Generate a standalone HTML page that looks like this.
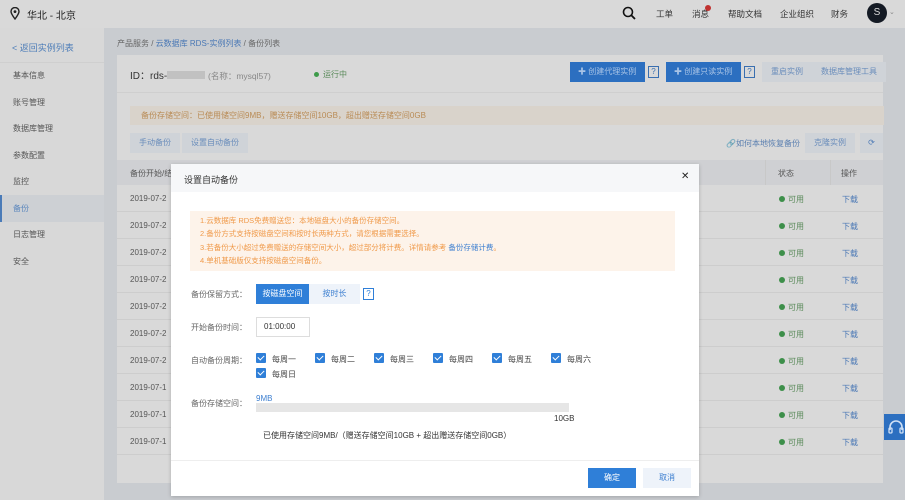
<!DOCTYPE html>
<html><head><meta charset="utf-8"><style>
*{margin:0;padding:0;box-sizing:border-box}
body{width:905px;height:500px;overflow:hidden;background:#c9ccd0;font-family:"Liberation Sans","Noto Sans CJK SC",sans-serif;font-size:8px;color:#555;position:relative}
.abs{position:absolute}
.top{left:0;top:0;width:905px;height:28px;background:#d9d9d9}
.top .t{position:absolute;top:8px;font-size:8.5px;color:#333}
.side{left:0;top:28px;width:104px;height:472px;background:#d8d8d8}
.side div{position:absolute;left:13px;font-size:8px;color:#555}
.card{left:117px;top:55px;width:766px;height:428px;background:#d9d9d9}
.btnb{background:#2c6fc0;color:#a9c4e6;height:20px;line-height:20px;font-size:8px;padding:0 8px}
.btnl{background:#cfd3d8;color:#6a8dbb;height:20px;line-height:20px;font-size:8px;padding:0 9px}
.q{width:11px;height:12px;border:1px solid #3a6fb0;color:#3a6fb0;font-size:8px;line-height:10px;text-align:center}
.row{left:117px;width:766px;height:27px;border-bottom:1px solid #cdcdcd}
.row .d{position:absolute;left:13px;top:9px;color:#555}
.row .s{position:absolute;left:662px;top:9px;color:#5a8a5a}
.row .s:before{content:"";display:inline-block;width:6px;height:6px;border-radius:50%;background:#3d8f4a;margin-right:3px}
.row .o{position:absolute;left:725px;top:9px;color:#4a78b5}
.modal{left:171px;top:164px;width:528px;height:332px;background:#fff;box-shadow:0 1px 4px rgba(0,0,0,.2)}
.lbl{position:absolute;left:20px;color:#666;font-size:8px}
.cb{display:inline-block;width:10px;height:10px;background:#2f7fd8;border-radius:1px;position:relative;vertical-align:-1px;margin-right:6px}
.cb:after{content:"";position:absolute;left:3px;top:1px;width:3px;height:5px;border:solid #fff;border-width:0 1.3px 1.3px 0;transform:rotate(45deg)}
.ck{position:absolute;font-size:8px;color:#444}
</style></head><body>
<div class="abs top">
 <svg class="abs" style="left:10px;top:7px" width="10" height="13" viewBox="0 0 10 13"><path d="M5 12C2 8 1 6 1 4.5a4 4 0 0 1 8 0C9 6 8 8 5 12z" fill="none" stroke="#222" stroke-width="1.4"/><circle cx="5" cy="4.6" r="1.4" fill="#222"/></svg>
 <div class="abs" style="left:27px;top:7px;font-size:10px;color:#222">华北 - 北京</div>
 <svg class="abs" style="left:622px;top:6px" width="14" height="14" viewBox="0 0 14 14"><circle cx="6" cy="6" r="4.5" fill="none" stroke="#111" stroke-width="1.6"/><path d="M9.3 9.3L13 13" stroke="#111" stroke-width="1.8"/></svg>
 <div class="t" style="left:656px">工单</div>
 <div class="t" style="left:692px">消息</div>
 <div class="abs" style="left:705px;top:5px;width:6px;height:6px;border-radius:50%;background:#c0312f"></div>
 <div class="t" style="left:728px">帮助文档</div>
 <div class="t" style="left:780px">企业组织</div>
 <div class="t" style="left:831px">财务</div>
 <div class="abs" style="left:867px;top:3px;width:20px;height:20px;border-radius:50%;background:#141a24;color:#ddd;font-size:10px;text-align:center;line-height:20px">S</div>
 <div class="abs" style="left:889px;top:8px;color:#888;font-size:7px">⌄</div>
</div>
<div class="abs side">
 <div style="left:12px;top:13px;color:#4d7db8;font-size:9px">&lt; 返回实例列表</div>
 <div style="left:0;top:34px;width:104px;height:1px;background:#cfcfcf"></div>
 <div style="top:42px">基本信息</div>
 <div style="top:69px">账号管理</div>
 <div style="top:95px">数据库管理</div>
 <div style="top:122px">参数配置</div>
 <div style="top:148px">监控</div>
 <div style="left:0;top:167px;width:104px;height:27px;background:#cdd0d4;border-left:2px solid #4a7bb8"></div>
 <div style="top:175px;color:#5a86bd">备份</div>
 <div style="top:201px">日志管理</div>
 <div style="top:228px">安全</div>
</div>
<div class="abs" style="left:117px;top:38px;color:#666">产品服务 / <span style="color:#4a78b5">云数据库 RDS-实例列表</span> / 备份列表</div>
<div class="abs card"></div>
<div class="abs" style="left:130px;top:67px;font-size:10px;color:#333">ID：rds-<span style="display:inline-block;width:38px;height:8px;background:#aaa;opacity:.5;vertical-align:0"></span> <span style="color:#888;font-size:8.5px">(名称：mysql57)</span></div>
<div class="abs" style="left:314px;top:69px;color:#5a8a5a"><span style="display:inline-block;width:5px;height:5px;border-radius:50%;background:#3d9b4a;margin-right:4px"></span>运行中</div>
<div class="abs btnb" style="left:570px;top:62px;width:75px">✚ 创建代理实例</div>
<div class="abs q" style="left:648px;top:66px">?</div>
<div class="abs btnb" style="left:666px;top:62px;width:75px">✚ 创建只读实例</div>
<div class="abs q" style="left:744px;top:66px">?</div>
<div class="abs btnl" style="left:762px;top:62px">重启实例</div>
<div class="abs btnl" style="left:812px;top:62px">数据库管理工具</div>
<div class="abs" style="left:117px;top:92px;width:766px;height:1px;background:#cfcfcf"></div>
<div class="abs" style="left:130px;top:106px;width:754px;height:19px;background:#d9d3cb;color:#b98b55;line-height:19px;padding-left:11px">备份存储空间：已使用储空间9MB，赠送存储空间10GB，超出赠送存储空间0GB</div>
<div class="abs btnl" style="left:130px;top:133px">手动备份</div>
<div class="abs btnl" style="left:182px;top:133px;padding:0 9px">设置自动备份</div>
<div class="abs" style="left:726px;top:138px;color:#5a7fb0">🔗如何本地恢复备份</div>
<div class="abs btnl" style="left:805px;top:133px">克隆实例</div>
<div class="abs btnl" style="left:860px;top:133px;width:23px;padding:0;text-align:center;color:#4a78b5">⟳</div>
<div class="abs" style="left:117px;top:160px;width:766px;height:25px;background:#cfd0d3"></div>
<div class="abs" style="left:130px;top:168px;color:#555">备份开始/结</div>
<div class="abs" style="left:778px;top:168px;color:#555">状态</div>
<div class="abs" style="left:841px;top:168px;color:#555">操作</div>
<div class="abs" style="left:765px;top:160px;width:1px;height:25px;background:#c8c8c8"></div>
<div class="abs" style="left:830px;top:160px;width:1px;height:25px;background:#c8c8c8"></div>
<div class="abs row" style="top:185px"><span class="d">2019-07-2</span><span class="s">可用</span><span class="o">下载</span></div>
<div class="abs row" style="top:212px"><span class="d">2019-07-2</span><span class="s">可用</span><span class="o">下载</span></div>
<div class="abs row" style="top:239px"><span class="d">2019-07-2</span><span class="s">可用</span><span class="o">下载</span></div>
<div class="abs row" style="top:266px"><span class="d">2019-07-2</span><span class="s">可用</span><span class="o">下载</span></div>
<div class="abs row" style="top:293px"><span class="d">2019-07-2</span><span class="s">可用</span><span class="o">下载</span></div>
<div class="abs row" style="top:320px"><span class="d">2019-07-2</span><span class="s">可用</span><span class="o">下载</span></div>
<div class="abs row" style="top:347px"><span class="d">2019-07-2</span><span class="s">可用</span><span class="o">下载</span></div>
<div class="abs row" style="top:374px"><span class="d">2019-07-1</span><span class="s">可用</span><span class="o">下载</span></div>
<div class="abs row" style="top:401px"><span class="d">2019-07-1</span><span class="s">可用</span><span class="o">下载</span></div>
<div class="abs row" style="top:428px"><span class="d">2019-07-1</span><span class="s">可用</span><span class="o">下载</span></div>
<div class="abs" style="left:884px;top:414px;width:21px;height:26px;background:#2c6fc0"></div>
<svg class="abs" style="left:888px;top:419px" width="17" height="16" viewBox="0 0 17 16"><path d="M2 11V8a6 6 0 0 1 12 0v3" fill="none" stroke="#cfe0f5" stroke-width="1.6"/><rect x="1" y="9" width="3" height="5" rx="1" fill="none" stroke="#cfe0f5" stroke-width="1.3"/><rect x="12" y="9" width="3" height="5" rx="1" fill="none" stroke="#cfe0f5" stroke-width="1.3"/></svg>

<div class="abs modal">
 <div class="abs" style="left:0;top:0;width:528px;height:28px;background:#f6f7f9"></div>
 <div class="abs" style="left:13px;top:9px;font-size:9px;color:#333">设置自动备份</div>
 <div class="abs" style="left:510px;top:7px;font-size:10px;color:#222">✕</div>
 <div class="abs" style="left:19px;top:47px;width:485px;height:60px;background:#fdf3ea;color:#f09a4a;font-size:7.5px;line-height:13.3px;padding:3px 0 0 10px">1.云数据库 RDS免费赠送您：本地磁盘大小的备份存储空间。<br>2.备份方式支持按磁盘空间和按时长两种方式，请您根据需要选择。<br>3.若备份大小超过免费赠送的存储空间大小，超过部分将计费。详情请参考 <span style="color:#3d7fd0">备份存储计费</span>。<br>4.单机基础版仅支持按磁盘空间备份。</div>
 <div class="lbl" style="top:125px">备份保留方式：</div>
 <div class="abs" style="left:85px;top:120px;width:53px;height:20px;background:#2f7fd8;color:#fff;line-height:20px;text-align:center">按磁盘空间</div>
 <div class="abs" style="left:138px;top:120px;width:51px;height:20px;background:#eef3fa;color:#3d7fd0;line-height:20px;text-align:center">按时长</div>
 <div class="abs q" style="left:192px;top:124px;border-color:#2f7fd8;color:#2f7fd8">?</div>
 <div class="lbl" style="top:158px">开始备份时间：</div>
 <div class="abs" style="left:85px;top:153px;width:54px;height:20px;border:1px solid #ddd;line-height:18px;padding-left:7px;color:#333">01:00:00</div>
 <div class="lbl" style="top:191px">自动备份周期：</div>
 <div class="ck" style="left:85px;top:189px"><i class="cb"></i>每周一</div>
 <div class="ck" style="left:144px;top:189px"><i class="cb"></i>每周二</div>
 <div class="ck" style="left:203px;top:189px"><i class="cb"></i>每周三</div>
 <div class="ck" style="left:262px;top:189px"><i class="cb"></i>每周四</div>
 <div class="ck" style="left:321px;top:189px"><i class="cb"></i>每周五</div>
 <div class="ck" style="left:380px;top:189px"><i class="cb"></i>每周六</div>
 <div class="ck" style="left:85px;top:204px"><i class="cb"></i>每周日</div>
 <div class="lbl" style="top:234px">备份存储空间：</div>
 <div class="abs" style="left:85px;top:230px;color:#3d7fd0">9MB</div>
 <div class="abs" style="left:85px;top:239px;width:313px;height:9px;background:#e6e6e6"></div>
 <div class="abs" style="left:383px;top:250px;color:#333">10GB</div>
 <div class="abs" style="left:92px;top:266px;color:#333">已使用存储空间9MB/（赠送存储空间10GB + 超出赠送存储空间0GB）</div>
 <div class="abs" style="left:0;top:296px;width:528px;height:1px;background:#eee"></div>
 <div class="abs" style="left:417px;top:304px;width:48px;height:20px;background:#2f7fd8;color:#fff;line-height:20px;text-align:center">确定</div>
 <div class="abs" style="left:472px;top:304px;width:48px;height:20px;background:#eef3fa;color:#3d7fd0;line-height:20px;text-align:center">取消</div>
</div>
</body></html>
